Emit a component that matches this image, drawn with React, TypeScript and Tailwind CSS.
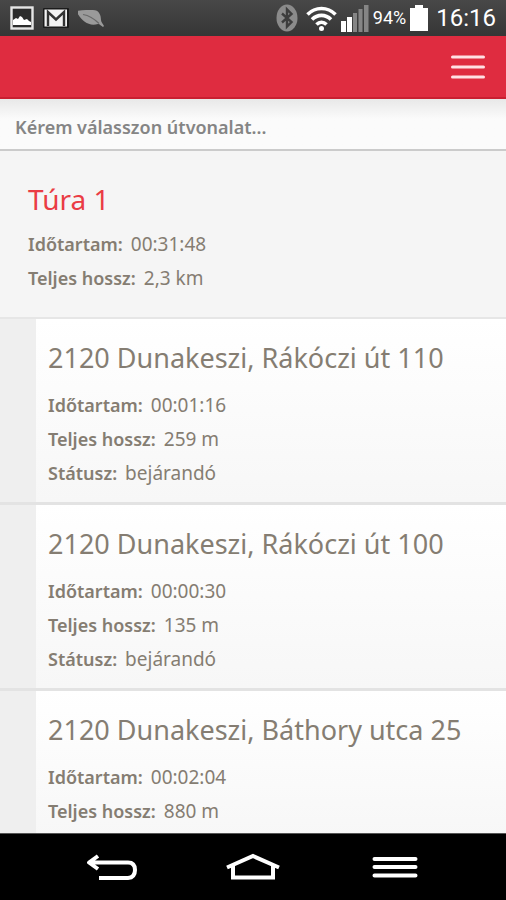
interface Stop {
  address: string;
  duration: string;
  length: string;
  status?: string;
}

const stops: Stop[] = [
  { address: '2120 Dunakeszi, Rákóczi út 110', duration: '00:01:16', length: '259 m', status: 'bejárandó' },
  { address: '2120 Dunakeszi, Rákóczi út 100', duration: '00:00:30', length: '135 m', status: 'bejárandó' },
  { address: '2120 Dunakeszi, Báthory utca 25', duration: '00:02:04', length: '880 m' },
];

function StatusBar() {
  return (
    <div className="flex h-9 shrink-0 items-center justify-between bg-linear-to-b from-[#484848] to-[#363636] pr-2.5 pl-2.5 font-['Roboto',sans-serif] text-white">
      <div className="flex items-center gap-2">
        {/* Picture */}
        <svg className="h-6 w-6" viewBox="0 0 24 24" aria-hidden="true">
          <rect x="1.5" y="1.5" width="21" height="21" fill="#2c2c2c" stroke="#e6e6e6" strokeWidth="2.4" />
          <path d="M3 19V14l3-2 2 1 2-3 2 1 2 3 3-1 2 2 2 1v3z" fill="#fff" />
        </svg>
        {/* Mail */}
        <svg className="h-6 w-7" viewBox="0 0 28 24" aria-hidden="true">
          <rect x="1" y="2" width="26" height="20" rx="1" fill="#1b1b1b" />
          <rect x="2.5" y="3.5" width="22.500" height="17" fill="#f2f2f2" />
          <path d="M6 20V6l8 7.500L22 6v14" fill="none" stroke="#333" strokeWidth="2.400" />
        </svg>
        {/* Leaf */}
        <svg className="h-6 w-7" viewBox="0 0 28 24" aria-hidden="true">
          <path d="M-2 5C5 4 10 4 15 4c6 0 8 5 8 10 0 2 2 4 3 6l-1 1c-2-1-3-3-5-3C10 21 3 14-2 5z" fill="#9a9a9a" />
          <path d="M5 8.500c6 1 11 4 16 9" fill="none" stroke="#686868" strokeWidth="1.200" />
        </svg>
      </div>
      <div className="flex items-center">
        {/* Bluetooth */}
        <svg className="mr-2 h-7 w-[22px]" viewBox="0 0 22 28" aria-hidden="true">
          <ellipse cx="11" cy="14" rx="10.500" ry="13.500" fill="#8b8b8b" />
          <path d="M6 9.500l9.500 8.500-4.500 4.500V5.500l4.500 4.500L6 18.500" fill="none" stroke="#3d3d3d" strokeWidth="2.400" />
        </svg>
        {/* Wi-Fi */}
        <svg className="mr-1 h-7 w-[31px]" viewBox="0 0 31 28" fill="none" stroke="#fff" strokeWidth="3.600" aria-hidden="true">
          <path d="M1.500 10.500c8-8 20-8 28 0M6 15.500c5.500-5.500 13.500-5.500 19 0M10.500 20.500c3-3 7-3 10 0" />
          <circle cx="15.500" cy="24.500" r="2.500" fill="#fff" stroke="none" />
        </svg>
        {/* Signal */}
        <svg className="mr-1 h-7 w-7" viewBox="0 0 28 28" aria-hidden="true">
          <path d="M0 17h5v11H0zM6 13h5v15H6z" fill="#fff" />
          <path d="M12 9h4v19h-4zM17.500 5h4v23h-4zM23 1h4.500v27H23z" fill="#858585" />
        </svg>
        <span className="mr-1 text-lg">94%</span>
        {/* Battery */}
        <svg className="mr-2 h-7 w-[18px]" viewBox="0 0 18 28" aria-hidden="true">
          <path d="M5 1h8v3h5v23H0V4h5z" fill="#fff" />
        </svg>
        <span className="text-2xl">16:16</span>
      </div>
    </div>
  );
}

function Detail({ label, value }: { label: string; value: string }) {
  return (
    <div className="flex gap-2">
      <dt className="text-lg/[34px] font-semibold">{label}:</dt>
      <dd className="text-[19px]/[34px]">{value}</dd>
    </div>
  );
}

function StopCard({ stop }: { stop: Stop }) {
  return (
    <li className="shrink-0 border-b-3 border-[#e3e3e3] bg-[#efefef] pl-9">
      <div className="bg-linear-to-b from-white to-[#f7f7f7] px-3 pt-[19px] pb-3">
        <h3 className="text-[27px] leading-10 whitespace-nowrap">{stop.address}</h3>
        <dl className="mt-2.5">
          <Detail label="Időtartam" value={stop.duration} />
          <Detail label="Teljes hossz" value={stop.length} />
          {stop.status && <Detail label="Státusz" value={stop.status} />}
        </dl>
      </div>
    </li>
  );
}

function NavBar() {
  return (
    <nav className="flex h-[67px] shrink-0 items-center justify-center border-t border-[#555] bg-black text-white">
      <button type="button" aria-label="Vissza" className="flex w-[142px] justify-center">
        <svg className="h-7 w-[52px]" viewBox="0 0 52 28" fill="none" stroke="currentColor" strokeWidth="4">
          <path d="M13 3L4 9.500l9 6.500M5 9.500h38q7 0 7 7.500t-7 8H14" strokeLinejoin="round" />
        </svg>
      </button>
      <button type="button" aria-label="Kezdőlap" className="flex w-[142px] justify-center">
        <svg className="h-7 w-[54px]" viewBox="0 0 54 28" fill="none" stroke="currentColor" strokeWidth="4">
          <path d="M1 14.500L27 3l26 11.500M7 12v12.500h40V12" />
        </svg>
      </button>
      <button type="button" aria-label="Menü" className="flex w-[142px] justify-center">
        <svg className="h-7 w-[46px]" viewBox="0 0 46 28" stroke="currentColor" strokeWidth="4" strokeLinecap="round">
          <path d="M2.500 6h41M2.500 14h41M2.500 22.500h41" />
        </svg>
      </button>
    </nav>
  );
}

export default function App() {
  return (
    <div className="flex h-screen flex-col bg-[#f5f5f5] font-['Noto_Sans',sans-serif] text-[#857d72]">
      <StatusBar />
      <header className="flex h-[63px] shrink-0 items-center justify-end border-b-2 border-[#c91f31] bg-[#df2c40] px-5">
        <button type="button" aria-label="Menü megnyitása" className="text-[#ffe1e4]">
          <svg className="h-7 w-9" viewBox="0 0 36 28" stroke="currentColor" strokeWidth="3" strokeLinecap="round">
            <path d="M2.500 4h31M2.500 14h31M2.500 24h31" />
          </svg>
        </button>
      </header>
      <p className="shrink-0 border-b-2 border-[#cbcbcb] bg-linear-to-b from-[#e8e8e8] to-[#fbfbfb] to-40% px-[15px] pt-4 pb-[10px] text-lg leading-6 font-semibold text-[#858585]">
        Kérem válasszon útvonalat...
      </p>
      <main className="min-h-0 flex-1 overflow-y-auto [scrollbar-width:none]">
        <section className="border-b-2 border-[#e6e6e6] px-7 pt-7 pb-[22px]">
          <h2 className="text-[28px] leading-10 text-[#ea3c44]">Túra 1</h2>
          <dl className="mt-2">
            <Detail label="Időtartam" value="00:31:48" />
            <Detail label="Teljes hossz" value="2,3 km" />
          </dl>
        </section>
        <ul className="flex flex-col">
          {stops.map((stop) => (
            <StopCard key={stop.address} stop={stop} />
          ))}
        </ul>
      </main>
      <NavBar />
    </div>
  );
}
